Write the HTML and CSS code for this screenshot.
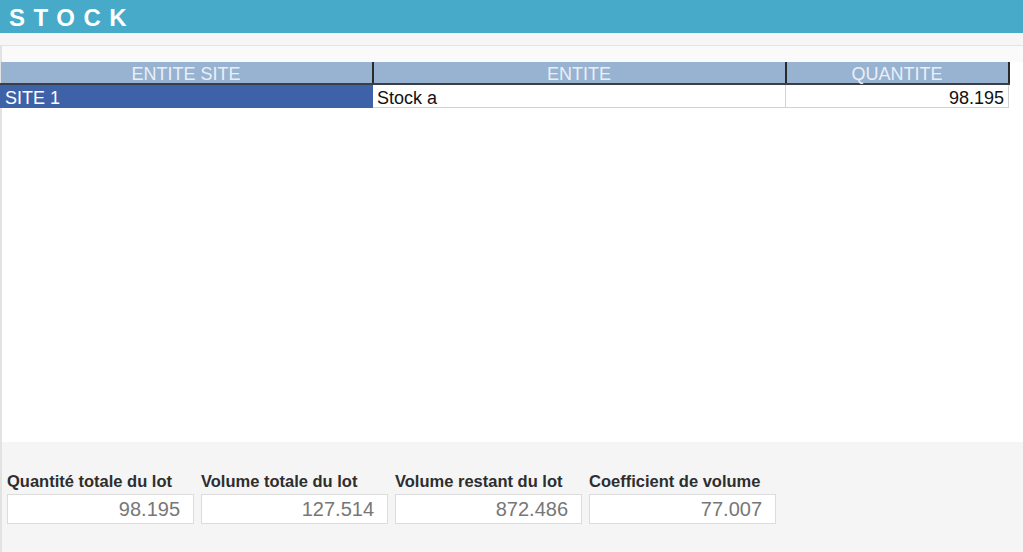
FILE: index.html
```html
<!DOCTYPE html>
<html lang="fr">
<head>
<meta charset="utf-8">
<title>Stock</title>
<link rel="stylesheet" href="styles.css">
</head>
<body>
<div class="page">
  <header class="titlebar"><h1 class="title">STOCK</h1></header>
  <div class="gap-strip"></div>
  <section class="panel">
    <div class="panel-top"></div>
    <table class="grid">
      <colgroup>
        <col class="c1"><col class="c2"><col class="c3">
      </colgroup>
      <thead>
        <tr><th>ENTITE SITE</th><th>ENTITE</th><th>QUANTITE</th></tr>
      </thead>
      <tbody>
        <tr><td class="sel">SITE 1</td><td>Stock a</td><td class="num">98.195</td></tr>
      </tbody>
    </table>
  </section>
  <section class="footer">
    <div class="field"><label>Quantité totale du lot</label><div class="box">98.195</div></div>
    <div class="field"><label>Volume totale du lot</label><div class="box">127.514</div></div>
    <div class="field"><label>Volume restant du lot</label><div class="box">872.486</div></div>
    <div class="field"><label>Coefficient de volume</label><div class="box">77.007</div></div>
  </section>
</div>
</body>
</html>
```
FILE: styles.css
```css
html, body {
  margin: 0;
  padding: 0;
  background: #ffffff;
  font-family: "Liberation Sans", Arial, sans-serif;
}
.page {
  width: 1023px;
  height: 552px;
  display: flex;
  flex-direction: column;
  overflow: hidden;
}
.titlebar {
  height: 33px;
  background: #47aac8;
  display: flex;
  align-items: center;
  flex: none;
}
.title {
  margin: 2px 0 0 9px;
  color: #ffffff;
  font-size: 24px;
  font-weight: bold;
  letter-spacing: 8.5px;
  line-height: 1;
}
.gap-strip {
  height: 12px;
  background: #f6f6f6;
  border-bottom: 1px solid #e4e4e4;
  flex: none;
}
.panel {
  flex: 1;
  background: #ffffff;
  border-left: 2px solid #e2e2e2;
  display: flex;
  flex-direction: column;
}
.panel-top {
  height: 16px;
  background: #fafafa;
  flex: none;
}
.grid {
  width: 1008px;
  margin-left: -2px;
  border-collapse: collapse;
  table-layout: fixed;
  font-size: 18px;
}
.c1 { width: 372px; }
.c2 { width: 413px; }
.c3 { width: 223px; }
.grid th {
  height: 22px;
  padding: 4px 0 0;
  box-sizing: border-box;
  vertical-align: top;
  background: #97b3d1;
  color: #e9eff6;
  font-weight: normal;
  text-align: center;
  border-left: 2px solid #2a2a2a;
  border-bottom: 2px solid #3b3f45;
  line-height: 17px;
}
.grid th:first-child { border-left: none; }
.grid th:last-child { border-right: 2px solid #2a2a2a; }
.grid td {
  height: 22px;
  padding: 5px 4px 0;
  box-sizing: border-box;
  vertical-align: top;
  color: #111;
  border: 1px solid #d2d2d2;
  line-height: 17px;
  white-space: nowrap;
}
.grid td.sel {
  background: #3e62a8;
  color: #ffffff;
  border-color: #3e62a8;
}
.grid td.num { text-align: right; }
.footer {
  height: 110px;
  flex: none;
  background: #f5f5f5;
  border-left: 2px solid #e2e2e2;
  display: flex;
  gap: 7px;
  padding: 30px 0 0 5px;
  box-sizing: border-box;
}
.field {
  display: flex;
  flex-direction: column;
  width: 187px;
}
.field label {
  font-size: 16.5px;
  font-weight: bold;
  color: #2e2e2e;
  height: 22px;
  line-height: 18px;
  white-space: nowrap;
}
.box {
  height: 28px;
  background: #ffffff;
  border: 1px solid #dcdcdc;
  color: #777777;
  font-size: 20px;
  text-align: right;
  padding-right: 13px;
  line-height: 29px;
}
```
